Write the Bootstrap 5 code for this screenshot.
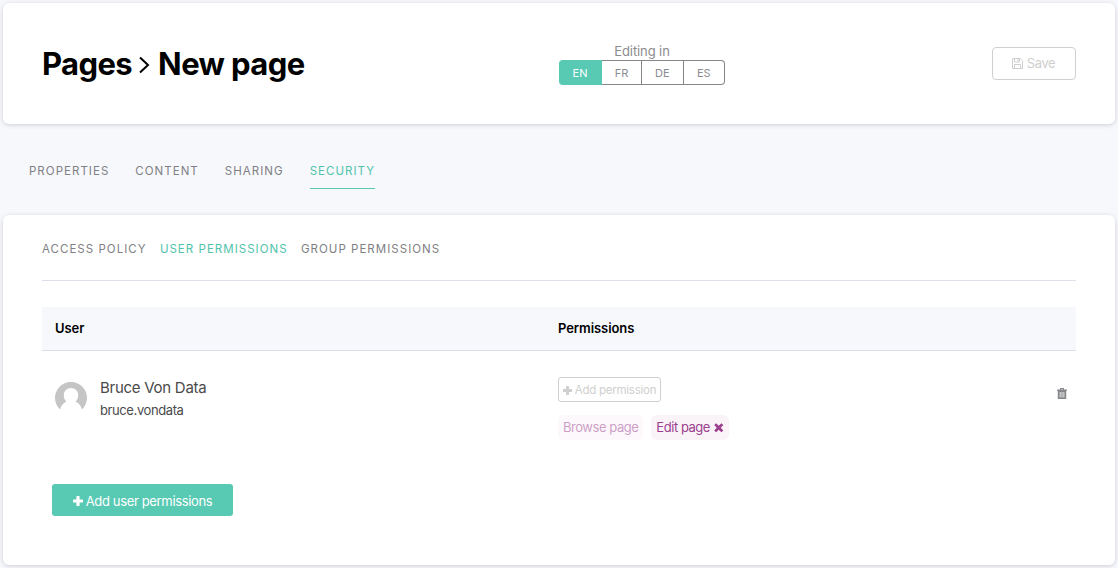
<!DOCTYPE html>
<html lang="en">
<head>
<meta charset="utf-8">
<meta name="viewport" content="width=device-width, initial-scale=1">
<title>Pages - New page</title>
<link href="https://cdn.jsdelivr.net/npm/bootstrap@5.3.0/dist/css/bootstrap.min.css" rel="stylesheet">
<style>
  body { background: #f7f8fc; font-family: Inter, "Liberation Sans", sans-serif; font-size: 13px; line-height: 20px; color: #4a4a4a; padding: 3px; height: 568px; overflow: hidden; }
  a { color: inherit; text-decoration: none; }
  svg { fill: currentColor; flex: none; }
  .panel { background: #fff; border-radius: 6px; box-shadow: 0 1px 4px rgba(60,65,80,.22); padding-left: 39px; padding-right: 39px; }
  .page-head { height: 121px; }
  .page-title { font-size: 31px; line-height: 40px; font-weight: 700; color: #000; margin: 1px 0 0; letter-spacing: -.6px; }
  .page-title svg { margin: 1px 8px 0 7px; }
  .lang-box { width: 166px; color: #8b8c90; margin-left: -1px; }
  .lang-box .caption-text { line-height: 17px; height: 17px; letter-spacing: -.1px; }
  .langs { height: 25px; font-size: 11px; line-height: 24px; }
  .langs a { text-align: center; border: 1px solid #85868a; border-left: 0; width: 42px; }
  .langs a.on { background: #58c9b3; color: #fff; width: 43px; flex: none; border-color: #58c9b3; border-radius: 4px 0 0 4px; }
  .langs a:nth-child(2) { width: 40px; flex: none; }
  .langs a:last-child { border-radius: 0 4px 4px 0; }
  .save { width: 84px; height: 33px; border: 1px solid #cfcfcf; border-radius: 4px; color: #cfcfcf; background: #fff; font-size: 13px; letter-spacing: -.4px; line-height: 20px; padding: 0 1px 0 0; margin-bottom: 1px; }
  .tabs { height: 91px; padding: 36px 0 0 26px; gap: 26px; }
  .caps { font-size: 11.5px; letter-spacing: 1.03px; text-transform: uppercase; color: #7f8084; }
  .tabs a { height: 29px; line-height: 22px; }
  .tabs .on { border-bottom: 1px solid #58c9b3; }
  .caps .on { color: #4fc4ab; }
  .main { height: 350px; }
  .subtabs { height: 66px; padding-top: 24px; gap: 13.3px; border-bottom: 1px solid #dcdfea; }
  .grid-head { margin-top: 26px; height: 44px; background: #f7f8fc; border-bottom: 1px solid #dcdfea; color: #000; font-weight: 600; padding: 0 0 1px 13px; letter-spacing: -.07px; }
  .col-user { width: 503px; }
  .grid-row { height: 133px; padding: 26px 9px 0 13px; }
  .who { gap: 13px; padding-top: 1px; }
  .who svg { margin-top: 4px; }
  .full-name { font-size: 15px; line-height: 20px; letter-spacing: -.27px; }
  .login { font-size: 13px; letter-spacing: -.4px; margin-top: 2px; }
  .add-perm { width: 103px; height: 25px; border: 1px solid #cfcfcf; border-radius: 3px; background: #fff; color: #cfcfcf; font-size: 11.5px; letter-spacing: -.25px; line-height: 20px; padding: 1px 0 0; gap: 3px; }
  .perms { margin-top: 13px; gap: 8px; letter-spacing: -.46px; }
  .perm { height: 25px; padding: 0 5px 1px; line-height: 19px; border-radius: 6px; background: #faf3f8; color: #9b3f8e; }
  .perm.faded { opacity: .5; }
  .add-user { width: 181px; height: 32px; margin-left: 10px; border: 0; border-radius: 3px; background: #58c9b3; color: #fff; font-size: 13px; letter-spacing: -.35px; line-height: 20px; padding: 1px 0 0; gap: 3px; }
</style>
</head>
<body>
<svg width="0" height="0" class="position-absolute">
  <symbol id="plus" viewBox="0 0 10 10"><path d="M4 0h2q.6 0 .6.6v2.8h2.8q.6 0 .6.6v2q0 .6-.6.6H6.600v2.800q0 .6-.6.6H4q-.6 0-.6-.6V6.600H.6Q0 6.600 0 6V4q0-.6.6-.6h2.800V.6Q3.400 0 4 0Z"/></symbol>
</svg>
<header class="panel page-head d-flex align-items-center justify-content-between">
  <h1 class="page-title d-flex align-items-center">
    <span>Pages</span>
    <svg width="11" height="18" viewBox="0 0 11 18" style="fill:none;stroke:#000;stroke-width:2"><path d="M1 1.500l8 7.500-8 7.500"/></svg>
    <span>New page</span>
  </h1>
  <div class="d-flex align-items-center" style="gap:267px">
    <div class="lang-box">
      <div class="caption-text text-center">Editing in</div>
      <nav class="langs d-flex"><a class="on" href="#">EN</a><a href="#">FR</a><a href="#">DE</a><a href="#">ES</a></nav>
    </div>
    <button class="btn save d-flex align-items-center justify-content-center gap-1">
      <svg width="11" height="11" viewBox="0 0 11 11" style="fill:none;stroke:currentColor"><path d="M.5.5h7.800l2.200 2.200v7.800H.5ZM2.500.5v3.500h5V.5M6 1v2.500M2.500 10.500v-4h6v4"/></svg>
      <span>Save</span>
    </button>
  </div>
</header>

<nav class="tabs caps d-flex">
  <a href="#">Properties</a><a href="#">Content</a><a href="#">Sharing</a><a class="on" href="#">Security</a>
</nav>

<main class="panel main">
  <nav class="subtabs caps d-flex">
    <a href="#">Access policy</a><a class="on" href="#">User permissions</a><a href="#">Group permissions</a>
  </nav>
  <div class="grid-head d-flex align-items-center">
    <div class="col-user">User</div><div>Permissions</div>
  </div>
  <div class="grid-row d-flex">
    <div class="col-user who d-flex align-items-start">
      <svg width="32" height="32" viewBox="0 0 32 32"><path fill="#c5c5c5" d="M5 27.500A16 16 0 1 1 27 27.500C26 23.500 23.500 21 20.500 19.500C22.500 18 23.200 15.500 23.200 13C23.200 9 20 6 16 6S8.800 9 8.800 13C8.800 15.500 9.500 18 11.500 19.500C8.500 21 6 23.500 5 27.500Z"/></svg>
      <div><div class="full-name">Bruce Von Data</div><div class="login">bruce.vondata</div></div>
    </div>
    <div class="flex-grow-1">
      <button class="btn add-perm d-flex align-items-center justify-content-center"><svg width="9" height="9"><use href="#plus"/></svg><span>Add permission</span></button>
      <div class="perms d-flex">
        <span class="perm faded d-flex align-items-center">Browse page</span>
        <span class="perm d-flex align-items-center gap-1"><span>Edit page</span><svg width="9.500" height="9.500" viewBox="0 0 9 9" style="margin-top:1px"><path d="M2 .2L4.500 2.600 7 .2 8.800 2 6.400 4.500 8.800 7 7 8.800 4.500 6.400 2 8.800.2 7 2.600 4.500.2 2Z"/></svg></span>
      </div>
    </div>
    <svg width="10" height="11" viewBox="0 0 10 11" style="color:#85868a;margin-top:11px"><path fill-rule="evenodd" d="M3 0h4v1.500h3v1.200H9.200V11H.8V2.700H0V1.500h3ZM4 .9v.6h2V.9ZM2.700 4v5.500h.8V4ZM4.600 4v5.500h.8V4ZM6.500 4v5.500h.8V4Z"/></svg>
  </div>
  <button class="btn add-user d-flex align-items-center justify-content-center"><svg width="10" height="10"><use href="#plus"/></svg><span>Add user permissions</span></button>
</main>
<script src="https://cdn.jsdelivr.net/npm/bootstrap@5.3.0/dist/js/bootstrap.bundle.min.js"></script>
</body>
</html>
